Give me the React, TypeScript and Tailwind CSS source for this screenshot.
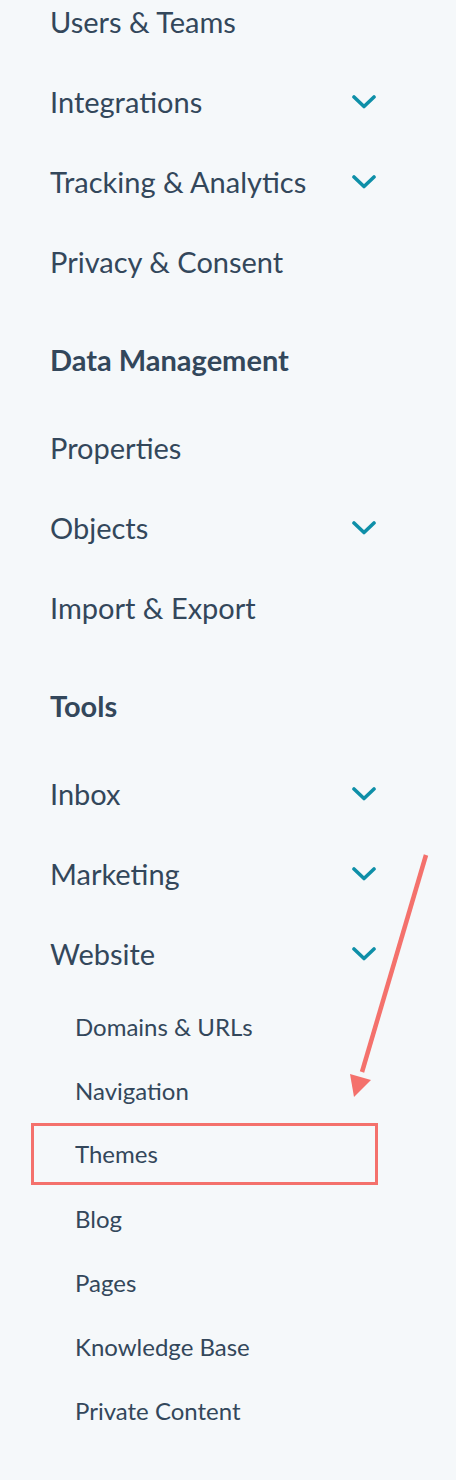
import React from 'react';

type Row = { label: string; chevron?: boolean };

const Chevron = () => (
    <svg width="24" height="14" viewBox="0 0 24 14" className="shrink-0">
        <polyline
            points="2,2 12,11.5 22,2"
            fill="none"
            stroke="#0e8fa8"
            strokeWidth="3.6"
            strokeLinecap="round"
            strokeLinejoin="round"
        />
    </svg>
);

const MainRow = ({ label, chevron }: Row) => (
    <div className="flex h-20 items-center justify-between">
        <span className="text-[29px] leading-9">{label}</span>
        {chevron && <Chevron />}
    </div>
);

const Header = ({ label }: { label: string }) => (
    <div className="pt-10 pb-[30px] text-[29px] font-bold leading-9">{label}</div>
);

const SubRow = ({ label }: { label: string }) => (
    <div className="flex h-16 items-center pl-[25px] text-[24px]">{label}</div>
);

const App = () => {
    return (
        <div
            className="relative h-[1480px] w-[456px] overflow-hidden bg-[#f5f8fa] text-[#33475b]"
            style={{ fontFamily: 'Lato, "Noto Sans", sans-serif' }}
        >
            <div className="-mt-[18px] w-[376px] pl-[50px]">
                <MainRow label="Users & Teams" />
                <MainRow label="Integrations" chevron />
                <MainRow label="Tracking & Analytics" chevron />
                <MainRow label="Privacy & Consent" />

                <Header label="Data Management" />
                <MainRow label="Properties" />
                <MainRow label="Objects" chevron />
                <MainRow label="Import & Export" />

                <Header label="Tools" />
                <MainRow label="Inbox" chevron />
                <MainRow label="Marketing" chevron />
                <MainRow label="Website" chevron />

                <div className="pt-px">
                    <SubRow label="Domains & URLs" />
                    <SubRow label="Navigation" />
                    <div className="-ml-[19px] -mr-[2px] mb-[2px] flex h-[62px] items-center border-[3px] border-[#f4716c] pl-[41px] text-[24px]">
                        Themes
                    </div>
                    <SubRow label="Blog" />
                    <SubRow label="Pages" />
                    <SubRow label="Knowledge Base" />
                    <SubRow label="Private Content" />
                </div>
            </div>

            {/* annotation arrow */}
            <svg
                className="pointer-events-none absolute left-0 top-0"
                width="456"
                height="1480"
                viewBox="0 0 456 1480"
            >
                <line x1="426" y1="855" x2="362" y2="1072" stroke="#f4716c" strokeWidth="4.5" />
                <polygon points="350,1074 371,1080 354,1097" fill="#f4716c" />
            </svg>
        </div>
    );
};

export default App;
